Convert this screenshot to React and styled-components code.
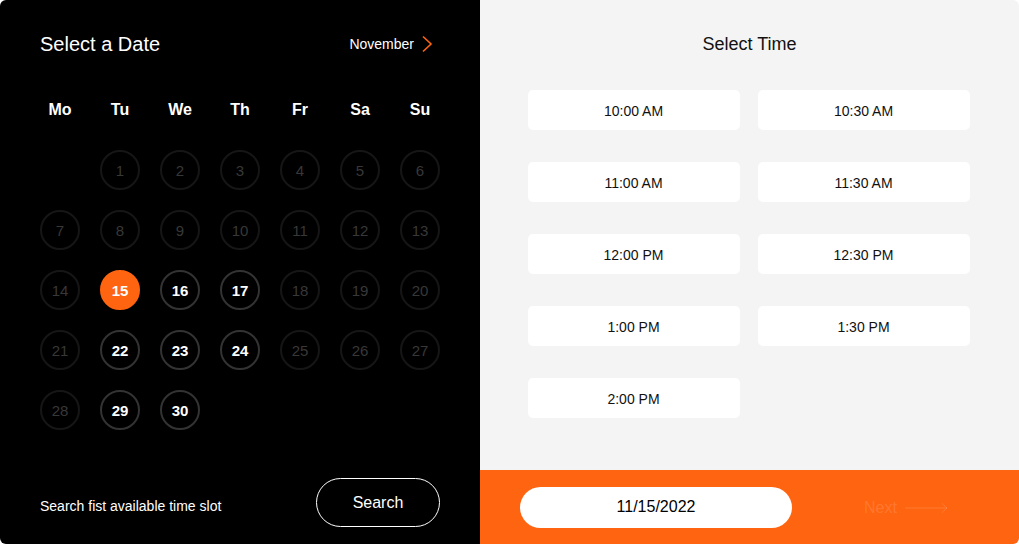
import React from 'react';
import styled, { createGlobalStyle } from 'styled-components';

const GlobalStyle = createGlobalStyle`
  html, body { margin: 0; padding: 0; background: #fff; }
  body { font-family: "Liberation Sans", Arial, sans-serif; }
  * { box-sizing: border-box; }
`;

const ORANGE = '#ff6410';

const days = ['Mo', 'Tu', 'We', 'Th', 'Fr', 'Sa', 'Su'];
const available = [16, 17, 22, 23, 24, 29, 30];
const selected = 15;
const times = ['10:00 AM', '10:30 AM', '11:00 AM', '11:30 AM', '12:00 PM', '12:30 PM', '1:00 PM', '1:30 PM', '2:00 PM'];

const App = () => {
  const cells = [null];
  for (let d = 1; d <= 30; d++) cells.push(d);

  return (
    <>
      <GlobalStyle />
      <Card>
        <DatePanel>
          <Header>
            <Title>Select a Date</Title>
            <Month>
              November
              <svg width="12" height="18" viewBox="0 0 12 18">
                <path d="M2 1.5 L10 9 L2 16.5" fill="none" stroke={ORANGE} strokeWidth="1.6" />
              </svg>
            </Month>
          </Header>
          <Grid>
            {days.map((d) => (
              <DayName key={d}>{d}</DayName>
            ))}
            {cells.map((d, i) =>
              d === null ? (
                <Empty key={'e' + i} />
              ) : (
                <Day
                  key={d}
                  $state={d === selected ? 'selected' : available.includes(d) ? 'open' : 'off'}
                >
                  {d}
                </Day>
              )
            )}
          </Grid>
          <Bottom>
            <Hint>Search fist available time slot</Hint>
            <SearchButton>Search</SearchButton>
          </Bottom>
        </DatePanel>
        <TimePanel>
          <TimeBody>
            <TimeTitle>Select Time</TimeTitle>
            <Slots>
              {times.map((t) => (
                <Slot key={t}>{t}</Slot>
              ))}
            </Slots>
          </TimeBody>
          <Footer>
            <DateField>11/15/2022</DateField>
            <NextButton>
              Next
              <svg width="44" height="10" viewBox="0 0 44 10">
                <path d="M0 5 H42 M37 0.5 L42 5 L37 9.5" fill="none" stroke="currentColor" strokeWidth="1" />
              </svg>
            </NextButton>
          </Footer>
        </TimePanel>
      </Card>
    </>
  );
};

const Card = styled.div`
  display: flex;
  width: 1019px;
  height: 544px;
  border-radius: 6px;
  overflow: hidden;
`;

const DatePanel = styled.div`
  width: 480px;
  background: #000;
  color: #fff;
  display: flex;
  flex-direction: column;
  padding: 0 40px;
`;

const Header = styled.div`
  display: flex;
  justify-content: space-between;
  align-items: center;
  height: 88px;
`;

const Title = styled.h1`
  margin: 0;
  font-size: 20px;
  font-weight: 400;
`;

const Month = styled.div`
  display: flex;
  align-items: center;
  gap: 7px;
  font-size: 14px;
  svg { margin-right: 7px; }
`;

const Grid = styled.div`
  display: grid;
  grid-template-columns: repeat(7, 40px);
  column-gap: 20px;
  row-gap: 20px;
  margin-top: 1px;
`;

const DayName = styled.div`
  height: 40px;
  display: flex;
  align-items: center;
  justify-content: center;
  font-size: 16px;
  font-weight: 700;
  padding-top: 2px;
  margin-bottom: 1px;
`;

const Empty = styled.div`
  width: 40px;
  height: 40px;
`;

const Day = styled.div`
  width: 40px;
  height: 40px;
  border-radius: 50%;
  display: flex;
  align-items: center;
  justify-content: center;
  font-size: 15px;
  padding-top: 1px;
  border: 2px solid ${(p) => (p.$state === 'selected' ? ORANGE : p.$state === 'open' ? '#333' : '#161616')};
  background: ${(p) => (p.$state === 'selected' ? ORANGE : 'transparent')};
  color: ${(p) => (p.$state === 'off' ? '#383838' : '#fff')};
  font-weight: ${(p) => (p.$state === 'off' ? 400 : 700)};
`;

const Bottom = styled.div`
  margin-top: auto;
  padding-bottom: 17px;
  display: flex;
  justify-content: space-between;
  align-items: center;
`;

const Hint = styled.span`
  font-size: 14px;
  line-height: 16px;
  margin-top: 7px;
`;

const SearchButton = styled.button`
  width: 124px;
  height: 49px;
  border: 1px solid #fff;
  border-radius: 25px;
  background: transparent;
  color: #fff;
  font-family: inherit;
  font-size: 16px;
`;

const TimePanel = styled.div`
  flex: 1;
  display: flex;
  flex-direction: column;
  background: #f4f4f4;
`;

const TimeBody = styled.div`
  flex: 1;
  display: flex;
  flex-direction: column;
  align-items: center;
`;

const TimeTitle = styled.h2`
  margin: 34px 0 0;
  height: 21px;
  font-size: 18px;
  font-weight: 400;
  color: #111;
`;

const Slots = styled.div`
  display: grid;
  grid-template-columns: repeat(2, 212px);
  column-gap: 18px;
  row-gap: 32px;
  margin-top: 35px;
  margin-left: -2px;
`;

const Slot = styled.div`
  height: 40px;
  background: #fff;
  border-radius: 5px;
  display: flex;
  align-items: center;
  justify-content: center;
  font-size: 14px;
  color: #111;
  padding-top: 2px;
`;

const Footer = styled.div`
  height: 74px;
  background: ${ORANGE};
  display: flex;
  align-items: center;
  padding: 0 40px;
`;

const DateField = styled.div`
  width: 272px;
  height: 41px;
  border-radius: 21px;
  background: #fff;
  display: flex;
  align-items: center;
  justify-content: center;
  font-size: 16px;
  color: #000;
`;

const NextButton = styled.button`
  margin-left: 72px;
  display: flex;
  align-items: center;
  gap: 8px;
  background: transparent;
  border: none;
  padding: 0;
  font-family: inherit;
  font-size: 16px;
  color: rgba(255, 255, 255, 0.15);
  margin-top: 2px;
`;

export default App;
